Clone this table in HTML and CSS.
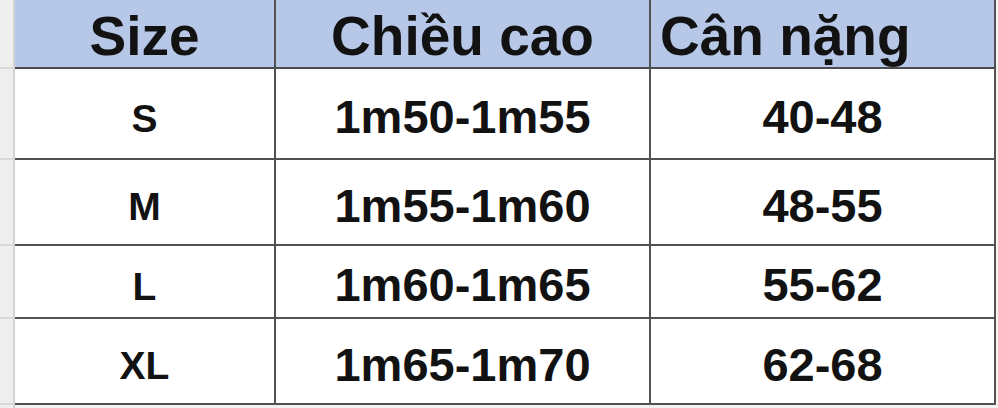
FILE: index.html
```html
<!DOCTYPE html>
<html lang="vi">
<head>
<meta charset="utf-8">
<title>Bảng size</title>
<link rel="stylesheet" href="styles.css">
</head>
<body>
<div class="sheet">
  <div class="gut r-head"></div>
  <div class="cell head c1 r-head">Size</div>
  <div class="cell head c2 r-head">Chiều cao</div>
  <div class="cell head c3 left r-head">Cân nặng</div>
  <div class="gut-end r-head"></div>

  <div class="gut r1"></div>
  <div class="cell size r1">S</div>
  <div class="cell c2 r1">1m50-1m55</div>
  <div class="cell c3 r1">40-48</div>
  <div class="gut-end r1"></div>

  <div class="gut r2"></div>
  <div class="cell size r2">M</div>
  <div class="cell c2 r2">1m55-1m60</div>
  <div class="cell c3 r2">48-55</div>
  <div class="gut-end r2"></div>

  <div class="gut r3"></div>
  <div class="cell size r3">L</div>
  <div class="cell c2 r3">1m60-1m65</div>
  <div class="cell c3 r3">55-62</div>
  <div class="gut-end r3"></div>

  <div class="gut r4"></div>
  <div class="cell size r4">XL</div>
  <div class="cell c2 r4">1m65-1m70</div>
  <div class="cell c3 r4">62-68</div>
  <div class="gut-end r4"></div>

  <div class="gut tail"></div>
  <div class="tail-row"></div>
</div>
</body>
</html>
```

FILE: styles.css
```css
html, body {
  margin: 0;
  padding: 0;
  background: #ffffff;
}

.sheet {
  width: 998px;
  height: 408px;
  overflow: hidden;
  display: grid;
  grid-template-columns: 15px 261px 375px 345px 2px;
  grid-template-rows: 69px 91px 86px 73px 86px 3px;
  font-family: "Liberation Sans", Arial, sans-serif;
  font-weight: 700;
  color: #121212;
}

.gut {
  background: #eeeeee;
  border-right: 2px solid #d4d4d4;
  border-bottom: 2px solid #d8d8d8;
  box-sizing: border-box;
}

.gut.tail {
  border-bottom: none;
}

.gut-end {
  background: #f4f4f4;
}

.tail-row {
  grid-column: 2 / 6;
  background: #f2f2f2;
}

.cell {
  box-sizing: border-box;
  border-right: 2px solid #515151;
  border-bottom: 2px solid #515151;
  display: flex;
  align-items: center;
  justify-content: center;
  font-size: 47px;
  padding-top: 6px;
  white-space: nowrap;
  background: #ffffff;
}

.cell.size {
  font-size: 39px;
  padding-top: 10px;
}

.cell.head {
  background: #b6c7e8;
  font-size: 55px;
  padding-top: 4px;
  border-bottom-color: #4c4c4c;
}

.cell.left {
  justify-content: flex-start;
  padding-left: 9px;
}
```
